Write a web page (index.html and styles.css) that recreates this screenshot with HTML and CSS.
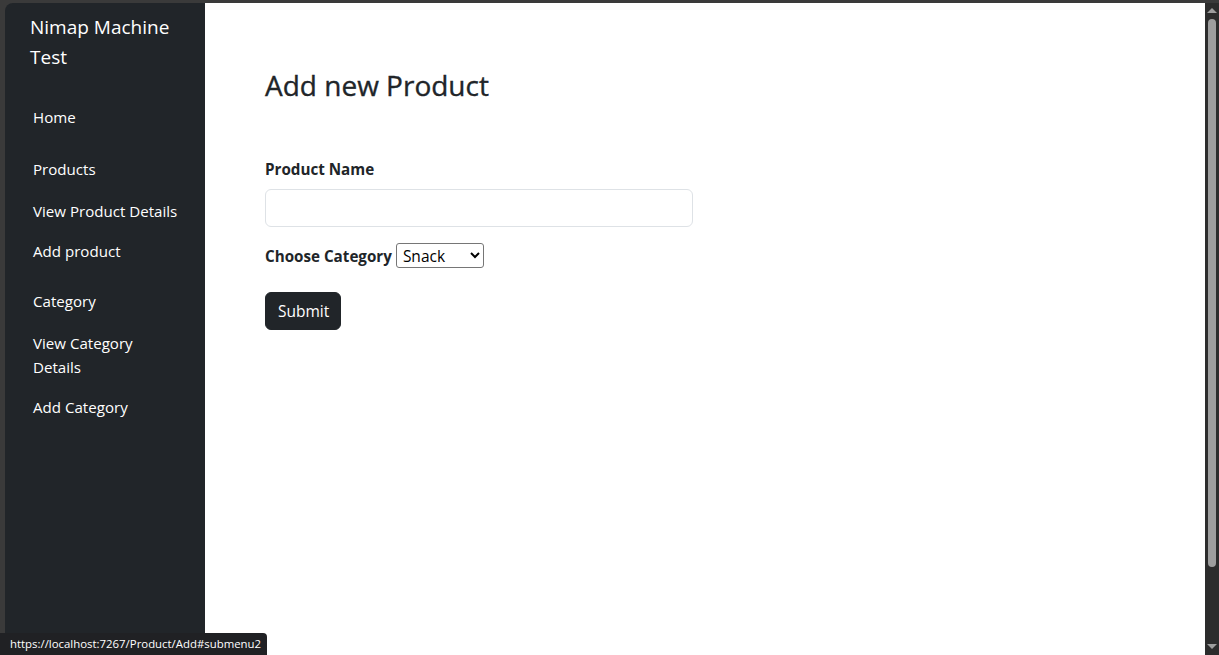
FILE: index.html
```html
<!DOCTYPE html>
<html lang="en">
<head>
<meta charset="utf-8">
<title>Add new Product</title>
<link rel="stylesheet" href="styles.css">
</head>
<body>
<div class="frame">
  <div class="app">
    <aside class="sidebar">
      <div class="brand">Nimap Machine Test</div>
      <nav class="nav">
        <a class="nav-link home" href="#">Home</a>
        <a class="nav-link group" href="#submenu1">Products</a>
        <a class="nav-link sub first" href="#">View Product Details</a>
        <a class="nav-link sub" href="#">Add product</a>
        <a class="nav-link group" href="#submenu2">Category</a>
        <a class="nav-link sub first" href="#">View Category Details</a>
        <a class="nav-link sub" href="#">Add Category</a>
      </nav>
    </aside>
    <main class="main">
      <h2 class="title">Add new Product</h2>
      <form class="form">
        <label class="form-label" for="pname">Product Name</label>
        <input class="form-control" id="pname" type="text">
        <div class="cat-row">
          <label class="form-label inline" for="cat">Choose Category</label>
          <select id="cat" class="cat-select">
            <option>Snack</option>
            <option>Drinks</option>
          </select>
        </div>
        <button type="button" class="btn">Submit</button>
      </form>
    </main>
    <div class="scrollbar">
      <div class="arrow up"></div>
      <div class="thumb"></div>
      <div class="track-rest"></div>
      <div class="arrow down"></div>
    </div>
  </div>
  <div class="statusbar">https://localhost:7267/Product/Add#submenu2</div>
</div>
</body>
</html>
```

FILE: styles.css
```css
* { box-sizing: border-box; }
html, body { margin: 0; padding: 0; height: 100%; }
body {
  font-family: "Open Sans", "Noto Sans", sans-serif;
  color: #212529;
  background: #3a3a3a;
  overflow: hidden;
}
.frame {
  height: 655px;
  padding: 3px 0 0 5px;
  background: #3a3a3a;
}
.app {
  display: flex;
  height: 652px;
}
.sidebar {
  width: 200px;
  flex: none;
  background: #212529;
  border-top-left-radius: 8px;
  color: #fff;
  padding: 9px 0 0 0;
}
.brand {
  font-size: 19px;
  line-height: 30px;
  padding-left: 25px;
  width: 175px;
}
.nav {
  display: flex;
  flex-direction: column;
  padding-left: 28px;
  padding-right: 22px;
}
.nav-link {
  color: #fff;
  text-decoration: none;
  font-size: 15.1px;
  line-height: 24px;
}
.nav-link.home { margin-top: 33px; }
.nav-link.group { margin-top: 28px; }
.nav-link.sub { margin-top: 16px; }
.nav-link.sub.first { margin-top: 18px; }
.nav-link.sub + .group { margin-top: 26px; }

.main {
  flex: 1;
  background: #fff;
  padding: 63px 60px 0 60px;
}
.title {
  margin: 0;
  font-size: 28px;
  font-weight: 500;
  line-height: 38px;
  -webkit-text-stroke: 0.35px #212529;
}
.form {
  margin-top: 53px;
  display: flex;
  flex-direction: column;
  align-items: flex-start;
}
.form-label {
  font-weight: 700;
  font-size: 15.2px;
  line-height: 24px;
  margin-bottom: 8px;
}
.form-label.inline { margin: 0 4px 0 0; }
.form-control {
  width: 428px;
  height: 38px;
  border: 1px solid #dee2e6;
  border-radius: 6px;
  font: inherit;
  padding: 6px 12px;
  outline: none;
}
.cat-row {
  margin-top: 16px;
  display: flex;
  align-items: center;
}
.cat-select {
  width: 88px;
  height: 25px;
  font-family: inherit;
  font-size: 15.5px;
  color: #000;
  border: 1px solid #767676;
  border-radius: 3px;
  background: #fff;
  padding: 0 2px;
}
.btn {
  margin-top: 24px;
  width: 76px;
  height: 38px;
  border: 1px solid #212529;
  border-radius: 6px;
  background: #212529;
  color: #fff;
  font-family: inherit;
  font-size: 15.5px;
  line-height: 24px;
  padding: 6px 12px;
}
.scrollbar {
  width: 14px;
  flex: none;
  background: #2c2c2c;
  display: flex;
  flex-direction: column;
  align-items: center;
}
.arrow {
  width: 0; height: 0;
  border-left: 5px solid transparent;
  border-right: 5px solid transparent;
}
.arrow.up {
  margin-top: 5px;
  border-bottom: 5px solid #9e9e9e;
}
.arrow.down {
  margin-bottom: 6px;
  border-top: 5px solid #9e9e9e;
}
.thumb {
  margin-top: 6px;
  width: 8px;
  height: 548px;
  background: #9e9e9e;
  border-radius: 4px;
}
.track-rest { flex: 1; }
.statusbar {
  position: absolute;
  left: 0;
  bottom: 0;
  height: 22px;
  padding: 0 6px 0 10px;
  background: #202124;
  border-top-right-radius: 4px;
  color: #fff;
  font-size: 11.4px;
  line-height: 22px;
  font-family: "Open Sans", "Noto Sans", sans-serif;
}
```
